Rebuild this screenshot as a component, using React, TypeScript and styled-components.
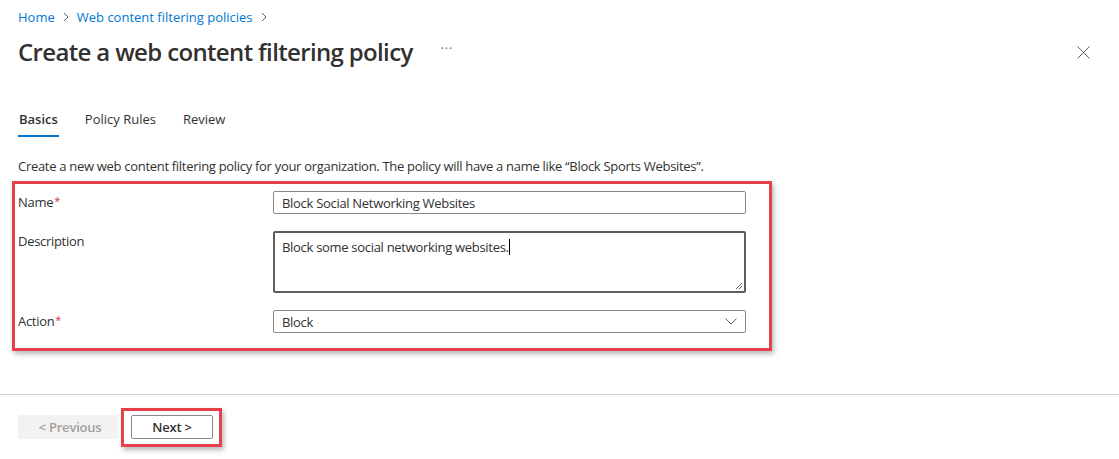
import React from "react";
import styled, { createGlobalStyle } from "styled-components";

const Global = createGlobalStyle`
  html, body { margin: 0; padding: 0; background: #fff; }
  body {
    font-family: "Segoe UI", "Open Sans", "Liberation Sans", sans-serif;
    color: #323130;
    font-size: 13px;
    letter-spacing: -0.3px;
    -webkit-font-smoothing: antialiased;
  }
  * { box-sizing: border-box; }
`;

const Page = styled.div`
  width: 1119px;
  height: 459px;
  display: flex;
  flex-direction: column;
  overflow: hidden;
`;

const Main = styled.div`
  padding: 7px 18px 0 18px;
  display: flex;
  flex-direction: column;
  flex: 1;
`;

const Breadcrumb = styled.nav`
  display: flex;
  align-items: center;
  gap: 6px;
  height: 20px;
  font-size: 13px;
  letter-spacing: 0;
  line-height: 20px;
`;

const Crumb = styled.a`
  color: #0078d4;
  text-decoration: none;
`;

const Chevron = styled.svg`
  width: 10px;
  height: 10px;
  color: #605e5c;
`;

const TitleRow = styled.div`
  display: flex;
  align-items: center;
  height: 32px;
  margin-top: 9px;
`;

const Title = styled.h1`
  margin: 0;
  font-size: 24px;
  font-weight: 600;
  letter-spacing: -0.65px;
  line-height: 32px;
  color: #323130;
`;

const More = styled.span`
  margin-left: 28px;
  color: #605e5c;
  font-size: 12px;
  letter-spacing: 1px;
  line-height: 12px;
  margin-top: -6px;
`;

const Close = styled.button`
  margin-left: auto;
  margin-right: 11px;
  border: 0;
  background: transparent;
  padding: 0;
  width: 14px;
  height: 14px;
  display: flex;
  align-items: center;
  justify-content: center;
  color: #605e5c;
`;

const Tabs = styled.div`
  display: flex;
  gap: 25px;
  margin-top: 41px;
`;

const Tab = styled.div<{ $active?: boolean }>`
  height: 28px;
  line-height: 20px;
  font-size: 13px;
  letter-spacing: 0;
  font-weight: ${(p) => (p.$active ? 600 : 400)};
  color: #323130;
  border-bottom: 2px solid ${(p) => (p.$active ? "#0078d4" : "transparent")};
  padding: 0 1px;
`;

const Intro = styled.p`
  margin: 19px 0 0 0;
  line-height: 20px;
  font-size: 13px;
`;

const Highlight = styled.div`
  border: 3px solid #e8404a;
  box-shadow: 2px 3px 5px rgba(0, 0, 0, 0.28);
`;

const FormBox = styled(Highlight)`
  margin: 5px 0 0 -6px;
  width: 760px;
  padding: 7px 23px 15px 3px;
  display: grid;
  grid-template-columns: 255px 473px;
  row-gap: 17px;
`;

const Label = styled.label`
  font-size: 13px;
  line-height: 18px;
  padding-top: 1px;
`;

const Req = styled.span`
  color: #d13438;
  font-size: 11px;
  vertical-align: 2px;
  margin-left: 1px;
`;

const Field = styled.div`
  height: 23px;
  border: 1px solid #8a8886;
  border-radius: 2px;
  padding: 0 8px;
  display: flex;
  align-items: center;
  font-size: 13px;
  color: #323130;
`;

const Area = styled.div`
  position: relative;
  height: 62px;
  border: 2px solid #605e5c;
  border-radius: 2px;
  padding: 5px 7px;
  font-size: 13px;
  line-height: 18px;
`;

const Caret = styled.span`
  display: inline-block;
  width: 1px;
  height: 16px;
  background: #000;
  vertical-align: -3px;
`;

const Grip = styled.svg`
  position: absolute;
  right: 1px;
  bottom: 1px;
  width: 8px;
  height: 8px;
`;

const Select = styled(Field)`
  justify-content: space-between;
  padding-right: 8px;
`;

const Footer = styled.div`
  border-top: 1px solid #d2d0ce;
  height: 65px;
  padding: 20px 18px 0 18px;
  display: flex;
  align-items: flex-start;
  gap: 3px;
`;

const Button = styled.button<{ $disabled?: boolean }>`
  height: 24px;
  border-radius: 2px;
  font-family: inherit;
  font-size: 13px;
  letter-spacing: -0.2px;
  font-weight: 600;
  padding: 0;
  border: 1px solid ${(p) => (p.$disabled ? "#f3f2f1" : "#8a8886")};
  background: ${(p) => (p.$disabled ? "#f3f2f1" : "#fff")};
  color: ${(p) => (p.$disabled ? "#a19f9d" : "#323130")};
`;

const PrevButton = styled(Button)`
  width: 100px;
  padding-left: 4px;
`;

const NextButton = styled(Button)`
  width: 82px;
`;

const NextBox = styled(Highlight)`
  margin-top: -7px;
  padding: 4px 6px 5px 7px;
`;

const ChevronRight = () => (
  <Chevron viewBox="0 0 10 10">
    <path d="M3 1 L7 5 L3 9" fill="none" stroke="currentColor" strokeWidth="1" />
  </Chevron>
);

export default function App() {
  return (
    <>
      <Global />
      <Page>
        <Main>
          <Breadcrumb>
            <Crumb>Home</Crumb>
            <ChevronRight />
            <Crumb>Web content filtering policies</Crumb>
            <ChevronRight />
          </Breadcrumb>
          <TitleRow>
            <Title>Create a web content filtering policy</Title>
            <More>···</More>
            <Close aria-label="Close">
              <svg width="13" height="13" viewBox="0 0 13 13">
                <path d="M0.5 0.5 L12.5 12.5 M12.5 0.5 L0.5 12.5" stroke="currentColor" strokeWidth="1" fill="none" />
              </svg>
            </Close>
          </TitleRow>
          <Tabs>
            <Tab $active>Basics</Tab>
            <Tab>Policy Rules</Tab>
            <Tab>Review</Tab>
          </Tabs>
          <Intro>
            Create a new web content filtering policy for your organization. The policy will have a name like “Block Sports Websites”.
          </Intro>
          <FormBox>
            <Label>
              Name<Req>*</Req>
            </Label>
            <Field>Block Social Networking Websites</Field>
            <Label>Description</Label>
            <Area>
              Block some social networking websites.
              <Caret />
              <Grip viewBox="0 0 8 8">
                <path d="M7 1 L1 7 M7 4 L4 7" stroke="#605e5c" strokeWidth="1" />
              </Grip>
            </Area>
            <Label>
              Action<Req>*</Req>
            </Label>
            <Select>
              <span>Block</span>
              <svg width="12" height="7" viewBox="0 0 12 7">
                <path d="M0.5 0.5 L6 6 L11.5 0.5" stroke="#605e5c" strokeWidth="1" fill="none" />
              </svg>
            </Select>
          </FormBox>
        </Main>
        <Footer>
          <PrevButton $disabled>&lt; Previous</PrevButton>
          <NextBox>
            <NextButton>Next &gt;</NextButton>
          </NextBox>
        </Footer>
      </Page>
    </>
  );
}
